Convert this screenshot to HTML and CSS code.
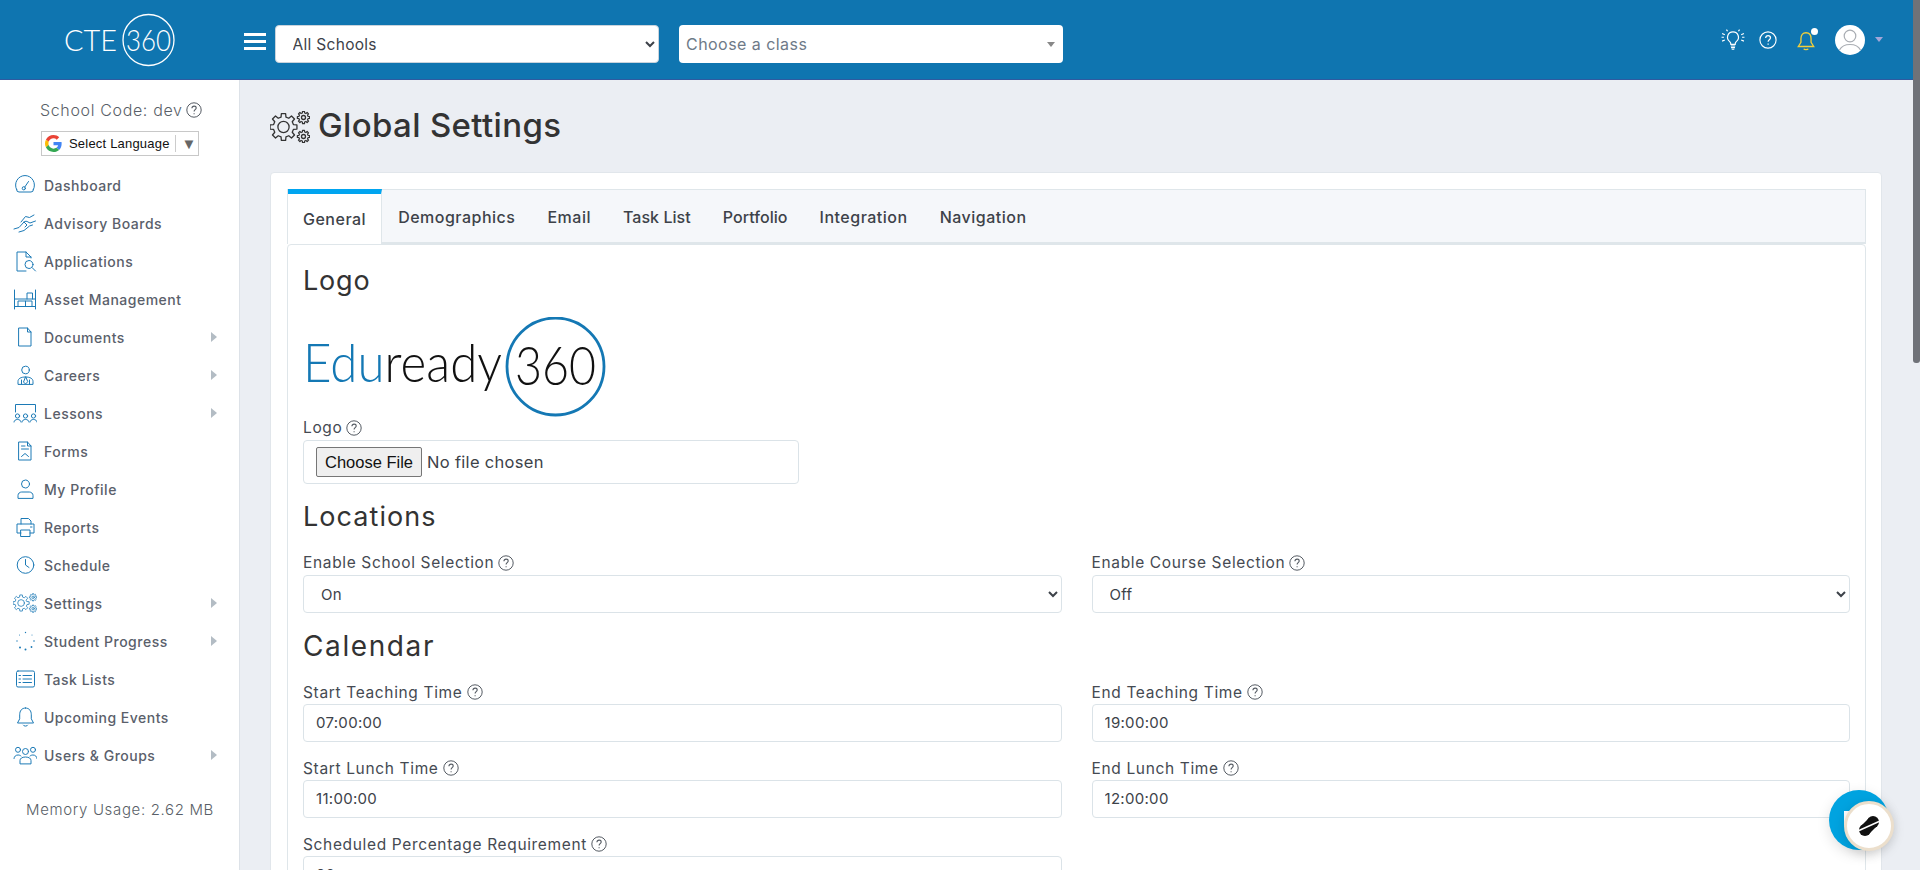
FILE: index.html
```html
<!DOCTYPE html>
<html lang="en">
<head>
<meta charset="utf-8">
<title>Global Settings</title>
<link rel="stylesheet" href="styles.css">
</head>
<body>
<svg class="defs" width="0" height="0" aria-hidden="true">
  <defs>
    <polygon id="gear" points="7.28,-1.81 9.88,-1.56 9.88,1.56 7.28,1.81 6.43,3.87 8.09,5.88 5.88,8.09 3.87,6.43 1.81,7.28 1.56,9.88 -1.56,9.88 -1.81,7.28 -3.87,6.43 -5.88,8.09 -8.09,5.88 -6.43,3.87 -7.28,1.81 -9.88,1.56 -9.88,-1.56 -7.28,-1.81 -6.43,-3.87 -8.09,-5.88 -5.88,-8.09 -3.87,-6.43 -1.81,-7.28 -1.56,-9.88 1.56,-9.88 1.81,-7.28 3.87,-6.43 5.88,-8.09 8.09,-5.88 6.43,-3.87"/>
    <symbol id="gears" viewBox="0 0 40 32">
      <g fill="none" stroke="currentColor" stroke-linejoin="round">
        <use href="#gear" transform="translate(13.5 16) scale(1.36)" stroke-width=".95"/>
        <circle cx="13.5" cy="16" r="5.6" stroke-width="1.3"/>
        <use href="#gear" transform="translate(33.5 6.5) scale(.62)" stroke-width="2"/>
        <circle cx="33.5" cy="6.5" r="2" stroke-width="1.3"/>
        <use href="#gear" transform="translate(33.5 25.5) scale(.62)" stroke-width="2"/>
        <circle cx="33.5" cy="25.5" r="2" stroke-width="1.3"/>
      </g>
    </symbol>
    <symbol id="help" viewBox="0 0 16 16">
      <circle cx="8" cy="8" r="7.2" fill="none" stroke="currentColor" stroke-width="1"/>
      <path d="M5.9 6.2c.1-1.3 1-2.1 2.2-2.1 1.2 0 2.1.8 2.1 1.9 0 1.7-2.1 1.7-2.1 3.5M8.1 11.2v1" fill="none" stroke="currentColor" stroke-width="1.1"/>
    </symbol>
  </defs>
</svg>

<header class="topbar">
  <svg class="brand" viewBox="0 0 140 60" width="140" height="60" role="img" aria-label="CTE 360">
    <text class="brand-text" x="4" y="41" textLength="53" lengthAdjust="spacingAndGlyphs">CTE</text>
    <circle cx="88.500" cy="30" r="25.500" fill="none" stroke="#fff" stroke-width="1.3"/>
    <text class="brand-text" x="66" y="41" textLength="45" lengthAdjust="spacingAndGlyphs">360</text>
  </svg>
  <div class="burger"><span></span><span></span><span></span></div>
  <select class="top-select"><option>All Schools</option></select>
  <div class="class-pick"><span>Choose a class</span><i class="class-caret"></i></div>
  <div class="top-icons">
    <svg class="ti-bulb" viewBox="0 0 22 22" width="24" height="24" fill="none" stroke="#fff" stroke-width="1.1">
      <path d="M11 3.5a5 5 0 0 0-3 9c.8.7 1 1.5 1 2.5h4c0-1 .2-1.8 1-2.5a5 5 0 0 0-3-9zM9 16.5h4M9.2 18h3.6M9.8 19.5h2.4"/>
      <path d="M1 5l2.5 1.2M1 12l2.5-1M.5 8.5h2.2M21 5l-2.5 1.2M21 12l-2.5-1M21.500 8.500h-2.200M5 1.500l1 1.500M17 1.500l-1 1.500"/>
    </svg>
    <svg class="ti-help" width="18" height="18"><use href="#help"/></svg>
    <span class="ti-bell">
      <svg viewBox="0 0 18 20" width="20" height="22" fill="none" stroke="#f2cf3b" stroke-width="1.2">
        <path d="M9 2.500c-3 0-4.600 2.300-4.600 5.500v3.200L2 15h14l-2.400-3.800V8c0-3.200-1.600-5.500-4.600-5.500zM7 17c.4 1.100 3.600 1.100 4 0"/>
      </svg>
      <i class="bell-dot"></i>
    </span>
    <svg class="ti-avatar" viewBox="0 0 30 30" width="30" height="30">
      <circle cx="15" cy="15" r="15" fill="#fff"/>
      <circle cx="15" cy="11" r="5.800" fill="none" stroke="#a9adb3" stroke-width="1.200"/>
      <path d="M4.500 25c2-3.800 6-5.500 10.500-5.500S23.500 21.200 25.500 25" fill="none" stroke="#a9adb3" stroke-width="1.200"/>
    </svg>
    <i class="avatar-caret"></i>
  </div>
</header>

<div class="layout">
  <aside class="sidebar">
    <div class="school-code">School Code: dev<svg class="help" width="16" height="16"><use href="#help"/></svg></div>
    <div class="translate">
      <svg viewBox="0 0 48 48" width="17" height="17">
        <path fill="#EA4335" d="M24 9.500c3.540 0 6.710 1.220 9.210 3.600l6.850-6.850C35.900 2.380 30.470 0 24 0 14.620 0 6.510 5.380 2.560 13.220l7.980 6.190C12.430 13.720 17.740 9.500 24 9.500z"/>
        <path fill="#4285F4" d="M46.980 24.550c0-1.570-.15-3.090-.38-4.550H24v9.020h12.940c-.58 2.960-2.260 5.480-4.780 7.180l7.730 6c4.510-4.180 7.090-10.360 7.090-17.650z"/>
        <path fill="#FBBC05" d="M10.530 28.590c-.48-1.450-.76-2.990-.76-4.590s.27-3.140.76-4.590l-7.980-6.190C.92 16.460 0 20.120 0 24c0 3.880.92 7.540 2.560 10.780l7.970-6.190z"/>
        <path fill="#34A853" d="M24 48c6.480 0 11.930-2.130 15.890-5.810l-7.730-6c-2.150 1.450-4.920 2.300-8.160 2.300-6.260 0-11.570-4.220-13.470-9.910l-7.980 6.190C6.510 42.620 14.620 48 24 48z"/>
      </svg>
      <span class="translate-text">Select Language</span>
      <i class="translate-sep"></i>
      <span class="translate-arrow">▼</span>
    </div>
    <nav class="nav">
      <a class="nav-item"><svg class="ni" viewBox="0 0 24 24"><path d="M3.600 16.500A9.500 9.500 0 1 1 20.400 16.500M3.600 16.500Q3.400 19 6 19H18Q20.600 19 20.400 16.500"/><circle cx="10.800" cy="15.300" r="1.600"/><path d="M11.800 14l3.700-5.500"/></svg><span>Dashboard</span></a>
      <a class="nav-item"><svg class="ni" viewBox="0 0 24 24"><path d="M1 18l5-1.500 5-5.500c1-1 3-1 4 0l2 1 5.500-2M8 11l4.500-5.500 4 1 4.500-2.500M6 21l5-1.500 5.500-4.500 3-1M11 11l3 3-2 2"/></svg><span>Advisory Boards</span></a>
      <a class="nav-item"><svg class="ni" viewBox="0 0 24 24"><path d="M13 22H4V3h9l5 5v1M13 3v5h5"/><circle cx="16" cy="15.500" r="4"/><path d="M19 18.500l3.500 3.500"/></svg><span>Applications</span></a>
      <a class="nav-item"><svg class="ni" viewBox="0 0 24 24"><path d="M1.500 3v19M22.500 3v19M1.500 19.500h21M1.500 12h21M14 12V6h5.500v6M5 19.500V14h7.500v5.500M12.500 14H19v5.500"/></svg><span>Asset Management</span></a>
      <a class="nav-item has-sub"><svg class="ni" viewBox="0 0 24 24"><path d="M6 3h8.500L18 7v14H6zM14.500 3v4H18"/></svg><span>Documents</span><i class="arrow"></i></a>
      <a class="nav-item has-sub"><svg class="ni" viewBox="0 0 24 24"><circle cx="12.500" cy="7" r="3.800"/><path d="M5 21v-2.500c0-3 3-4.500 7.500-4.500s7.500 1.500 7.500 4.500V21zM12.500 14l-2 5 2 2 2-2zM8.500 17v4M16.500 17v4"/></svg><span>Careers</span><i class="arrow"></i></a>
      <a class="nav-item has-sub"><svg class="ni" viewBox="0 0 24 24"><path d="M2.500 11V3.500h20V11"/><circle cx="4.500" cy="15" r="2.100"/><circle cx="12.500" cy="15" r="2.100"/><circle cx="20.500" cy="15" r="2.100"/><path d="M1 21c0-3.500 7-3.500 7 0M9 21c0-3.500 7-3.500 7 0M17 21c0-3.500 7-3.500 7 0"/></svg><span>Lessons</span><i class="arrow"></i></a>
      <a class="nav-item"><svg class="ni" viewBox="0 0 24 24"><path d="M6 3h8.500L18 7v14H6zM14.500 3v4H18M8.500 7h3.500M8.500 10h7M8.500 17.500l3.500-3 3.500 3"/></svg><span>Forms</span></a>
      <a class="nav-item"><svg class="ni" viewBox="0 0 24 24"><circle cx="12.500" cy="7" r="4"/><path d="M5 21v-2.500c0-2 1.700-3.500 3.700-3.500h7.600c2 0 3.700 1.500 3.700 3.500V21z"/></svg><span>My Profile</span></a>
      <a class="nav-item"><svg class="ni" viewBox="0 0 24 24"><path d="M8 9V3.500h7.500L18 6v3M8 18H4V9h17v9h-4M8 15h9v6.500H8zM17.500 12h1.500"/></svg><span>Reports</span></a>
      <a class="nav-item"><svg class="ni" viewBox="0 0 24 24"><circle cx="12.500" cy="12" r="8.300"/><path d="M12.500 6.500V12l3.500 2.500"/></svg><span>Schedule</span></a>
      <a class="nav-item has-sub"><svg class="ni ni-gears"><use href="#gears"/></svg><span>Settings</span><i class="arrow"></i></a>
      <a class="nav-item has-sub"><svg class="ni ni-dots" viewBox="0 0 24 24"><circle cx="12.500" cy="3.500" r=".7"/><circle cx="19" cy="6" r=".5"/><circle cx="21" cy="12" r=".8"/><circle cx="18.500" cy="18" r=".9"/><circle cx="12.500" cy="20.500" r="1"/><circle cx="7" cy="18.500" r="1"/><circle cx="4" cy="12" r=".7"/><circle cx="6.500" cy="6" r=".5"/></svg><span>Student Progress</span><i class="arrow"></i></a>
      <a class="nav-item"><svg class="ni" viewBox="0 0 24 24"><rect x="3.500" y="4" width="18" height="16" rx="1.500"/><path d="M10 8.500h8.500M10 12h8.500M10 15.500h8.500M6 8.500h1.500M6 12h1.500M6 15.500h1.500"/></svg><span>Task Lists</span></a>
      <a class="nav-item"><svg class="ni" viewBox="0 0 24 24"><path d="M12.500 3c-3.800 0-5.800 2.800-5.800 6.800v4L4.500 18h16l-2.200-4.200v-4C18.300 5.800 16.300 3 12.500 3zM10.300 20.200c.5 1.300 3.900 1.300 4.400 0"/></svg><span>Upcoming Events</span></a>
      <a class="nav-item has-sub"><svg class="ni" viewBox="0 0 24 24"><circle cx="12.500" cy="8.500" r="3"/><circle cx="5" cy="6.800" r="2.500"/><circle cx="20" cy="6.800" r="2.500"/><path d="M7 20.500v-3c0-2 2-3.500 5.500-3.500s5.500 1.500 5.500 3.500v3zM1 15.500c.2-2 1.700-3.500 4-3.500 1.200 0 2.200.3 3 1M24 15.500c-.2-2-1.700-3.500-4-3.500-1.200 0-2.200.3-3 1"/></svg><span>Users &amp; Groups</span><i class="arrow"></i></a>
    </nav>
    <div class="memory">Memory Usage: 2.62 MB</div>
  </aside>

  <main class="main">
    <h1 class="page-title"><svg class="title-icon"><use href="#gears"/></svg><span class="title-text">Global Settings</span></h1>
    <section class="card">
      <div class="tabs">
        <a class="tab active">General</a>
        <a class="tab">Demographics</a>
        <a class="tab">Email</a>
        <a class="tab tight">Task List</a>
        <a class="tab tight">Portfolio</a>
        <a class="tab">Integration</a>
        <a class="tab">Navigation</a>
      </div>
      <div class="panel">
        <h3 class="section-head first">Logo</h3>
        <svg class="edu-logo" viewBox="0 0 303 100" width="303" height="100" role="img" aria-label="Eduready 360">
          <text class="edu-text" x="0" y="65" textLength="199" lengthAdjust="spacingAndGlyphs"><tspan fill="#1478b4">Edu</tspan>ready</text>
          <circle cx="252.500" cy="49.500" r="48.500" fill="none" stroke="#1478b4" stroke-width="2.800"/>
          <text class="edu-text" x="212" y="68" textLength="81" lengthAdjust="spacingAndGlyphs">360</text>
        </svg>
        <label class="field-label logo-label">Logo <svg class="help" width="16" height="16"><use href="#help"/></svg></label>
        <div class="file-box"><input class="file-input" type="file"></div>

        <h3 class="section-head locations">Locations</h3>
        <div class="row">
          <div class="group">
            <label class="field-label">Enable School Selection <svg class="help" width="16" height="16"><use href="#help"/></svg></label>
            <select class="control"><option>On</option></select>
          </div>
          <div class="group">
            <label class="field-label">Enable Course Selection <svg class="help" width="16" height="16"><use href="#help"/></svg></label>
            <select class="control"><option>Off</option></select>
          </div>
        </div>

        <h3 class="section-head calendar">Calendar</h3>
        <div class="row">
          <div class="group">
            <label class="field-label">Start Teaching Time <svg class="help" width="16" height="16"><use href="#help"/></svg></label>
            <input class="control" value="07:00:00">
          </div>
          <div class="group">
            <label class="field-label">End Teaching Time <svg class="help" width="16" height="16"><use href="#help"/></svg></label>
            <input class="control" value="19:00:00">
          </div>
          <div class="group">
            <label class="field-label">Start Lunch Time <svg class="help" width="16" height="16"><use href="#help"/></svg></label>
            <input class="control" value="11:00:00">
          </div>
          <div class="group">
            <label class="field-label">End Lunch Time <svg class="help" width="16" height="16"><use href="#help"/></svg></label>
            <input class="control" value="12:00:00">
          </div>
          <div class="group">
            <label class="field-label">Scheduled Percentage Requirement <svg class="help" width="16" height="16"><use href="#help"/></svg></label>
            <input class="control" value="90">
          </div>
        </div>
      </div>
    </section>
  </main>
</div>

<div class="scroll-thumb"></div>
<div class="chat">
  <i class="chat-bubble"></i>
  <div class="chat-badge">
    <svg viewBox="0 0 24 24" width="24" height="24">
      <circle cx="8" cy="16" r="6" fill="#111"/>
      <circle cx="16" cy="8" r="6" fill="#111"/>
      <path d="M4 12l8-8 8 8-8 8z" fill="#111"/>
      <path d="M2 16.500L22 7.500" stroke="#fff" stroke-width="1.500"/>
    </svg>
  </div>
</div>
</body>
</html>
```
FILE: styles.css
```css
* { box-sizing: border-box; }
html, body { margin: 0; height: 100%; }
body {
  height: 100vh;
  overflow: hidden;
  display: flex;
  flex-direction: column;
  background: #ebeef3;
  font-family: Inter, "Noto Sans", sans-serif;
  color: #3d4249;
}
.defs { position: absolute; }

/* top bar */
.topbar {
  flex: 0 0 80px;
  display: flex;
  align-items: center;
  background: #0f75b0;
  border-bottom: 1px solid #2f5aa0;
  padding-left: 60px;
}
.brand { flex: none; margin-right: 44px; margin-top: 1px; }
.brand-text { font-family: Lato, sans-serif; font-weight: 300; font-size: 30px; fill: #fff; }
.burger { flex: none; width: 22px; display: flex; flex-direction: column; gap: 3.500px; margin-right: 9px; margin-top: 4px; }
.burger span { display: block; height: 3.500px; background: #fff; }
.top-select {
  flex: none;
  width: 384px;
  height: 38px;
  margin-top: 9px;
  padding: 0 8px 0 12.500px;
  border: 1px solid #c9d3dc;
  border-radius: 4px;
  background: #fff;
  font: 15.500px Inter, sans-serif;
  letter-spacing: .3px;
  color: #3d4249;
}
.class-pick {
  flex: none;
  width: 384px;
  height: 38px;
  margin-top: 9px;
  margin-left: 20px;
  display: flex;
  align-items: center;
  justify-content: space-between;
  padding: 0 8px 0 7px;
  border-radius: 4px;
  background: #fff;
  font-size: 16px;
  letter-spacing: .45px;
  color: #6e7a88;
}
.class-caret { border: 4px solid transparent; border-top: 5px solid #888; border-bottom: 0; }
.top-icons { position: relative; flex: 1; align-self: stretch; display: flex; align-items: center; padding-left: 658px; }
.ti-bulb { flex: none; }
.ti-help { flex: none; color: #fff; margin-left: 14px; }
.ti-bell { position: relative; flex: none; display: block; width: 20px; height: 22px; margin-left: 19px; margin-top: 2px; }
.ti-bell svg { display: block; }
.bell-dot { position: absolute; right: -2px; top: -2px; width: 7px; height: 7px; border-radius: 50%; background: #fff; }
.ti-avatar { flex: none; margin-left: 19px; }
.avatar-caret { flex: none; margin-left: 10px; border: 4px solid transparent; border-top: 5px solid #a3a6d8; border-bottom: 0; }

/* layout */
.layout { flex: 1; display: flex; min-height: 0; }
.sidebar {
  flex: 0 0 240px;
  background: #fff;
  border-right: 1px solid #dde2e8;
  padding-top: 19px;
}
.school-code {
  display: flex;
  align-items: center;
  justify-content: flex-start;
  height: 22px;
  padding-left: 40px;
  font-size: 16px;
  font-weight: 300;
  letter-spacing: .65px;
  color: #5a5f68;
  white-space: pre;
}
.help { flex: none; color: #555b63; vertical-align: -3px; }
.school-code .help { margin-left: 3px; }
.translate {
  display: flex;
  align-items: center;
  width: 158px;
  height: 25px;
  margin: 10px 0 0 41px;
  padding-left: 3px;
  border: 1px solid #c8c8c8;
  font-family: "Liberation Sans", Arial, sans-serif;
  font-size: 13px;
  letter-spacing: .2px;
  color: #111;
}
.translate-text { margin-left: 7px; }
.translate-sep { width: 1px; height: 17px; margin-left: 5px; background: #ccc; }
.translate-arrow { margin-left: 6px; font-size: 15px; color: #666; }
.nav { margin-top: 10px; }
.nav-item {
  display: flex;
  align-items: center;
  height: 38px;
  padding-left: 13px;
  padding-right: 22px;
  font-size: 14px;
  font-weight: 500;
  letter-spacing: .5px;
  color: #5a606b;
}
.ni {
  flex: none;
  width: 24px;
  height: 24px;
  margin-right: 7px;
  fill: none;
  stroke: #1c7ab6;
  stroke-width: 1;
  stroke-linejoin: round;
  stroke-linecap: round;
  color: #1c7ab6;
}
.ni-gears { stroke: none; }
.ni-dots { fill: #1c7ab6; stroke: none; }
.arrow { margin-left: auto; border: 5px solid transparent; border-left: 6px solid #b3bcc4; border-right: 0; }
.memory {
  margin-top: 26px;
  padding-left: 26px;
  font-size: 15px;
  font-weight: 300;
  letter-spacing: .65px;
  color: #5a5f68;
}

/* main */
.main { flex: 1; min-width: 0; padding: 0 38px 0 30px; }
.page-title {
  display: flex;
  align-items: center;
  height: 40px;
  margin: 27px 0 25px;
  font-size: 33px;
  font-weight: 500;
  letter-spacing: .35px;
  color: #333;
}
.title-icon { flex: none; width: 40px; height: 32px; margin-right: 8px; color: #333; }
.title-text { padding-bottom: 4px; }
.card {
  background: #fff;
  border: 1px solid #e1e6eb;
  border-radius: 4px;
  padding: 16px 15px 0 16px;
  height: 900px;
}
.tabs {
  display: flex;
  height: 55px;
  background: #f5f7fa;
  border: 1px solid #dfe6ea;
  border-bottom-width: 2px;
}
.tab {
  display: flex;
  align-items: center;
  padding: 0 16px;
  margin-top: 2px;
  font-size: 16px;
  font-weight: 500;
  letter-spacing: .5px;
  color: #3d4249;
}
.tab.tight { letter-spacing: .05px; }
.tab.active {
  margin-top: -1px;
  margin-bottom: -2px;
  padding-left: 15px;
  padding-right: 15px;
  background: #fff;
  border-top: 5px solid #00a5f0;
  border-right: 1px solid #dfe6ea;
}
.panel {
  border: 1px solid #dfe6ea;
  border-radius: 4px;
  padding: 0 15px;
  height: 800px;
}
.section-head {
  margin: 17px 0 18px;
  height: 32px;
  font-size: 27px;
  line-height: 32px;
  font-weight: 400;
  letter-spacing: .8px;
  color: #333;
}
.section-head.first { margin: 20px 0 20px; }
.section-head.locations { letter-spacing: 1.05px; }
.section-head.calendar { margin-top: 1.500px; margin-bottom: 19px; font-size: 28px; letter-spacing: 1.6px; }
.edu-logo { display: block; }
.edu-text { font-family: Lato, sans-serif; font-weight: 300; font-size: 53px; fill: #111; }
.field-label {
  display: flex;
  align-items: center;
  gap: 4px;
  height: 23px;
  font-size: 15.500px;
  font-weight: 400;
  letter-spacing: .65px;
  color: #454a52;
}
.logo-label { margin-top: -1px; margin-bottom: 1px; }
.file-box {
  width: 496px;
  height: 44px;
  padding: 6px 12px;
  border: 1px solid #dbe3e8;
  border-radius: 4px;
  display: flex;
  align-items: center;
}
.file-input { font: 16.500px Inter, sans-serif; letter-spacing: .3px; color: #3d4249; }
.file-input::file-selector-button {
  height: 30px;
  margin-right: 5px;
  padding: 0 8px;
  background: #efefef;
  border: 1px solid #767676;
  border-radius: 2px;
  color: #111;
}
.row { display: grid; grid-template-columns: 1fr 1fr; column-gap: 30px; }
.group { margin-bottom: 15px; }
.control {
  display: block;
  width: 100%;
  height: 38px;
  padding: 0 12px;
  background: #fff;
  border: 1px solid #dbe3e8;
  border-radius: 4px;
  font: 15px Inter, sans-serif;
  letter-spacing: .3px;
  color: #3d4249;
  outline: 0;
}
select.control { padding-left: 13px; margin-top: 1px; }

/* overlays */
.scroll-thumb {
  position: absolute;
  top: 0;
  right: 0;
  width: 7px;
  height: 363px;
  background: #6f7278;
  border-radius: 0 0 3px 3px;
}
.chat { position: absolute; left: 1829px; top: 790px; width: 66px; height: 62px; }
.chat-bubble {
  position: absolute;
  left: 0;
  top: 0;
  width: 60px;
  height: 60px;
  border-radius: 50%;
  background: #00a3e0;
  box-shadow: 0 4px 14px rgba(0, 0, 0, .12);
}
.chat-bubble::after {
  content: "";
  position: absolute;
  left: 15px;
  top: 21px;
  width: 14px;
  height: 14px;
  background: #fff;
}
.chat-badge {
  position: absolute;
  left: 15px;
  top: 11px;
  width: 50px;
  height: 50px;
  display: flex;
  align-items: center;
  justify-content: center;
  border-radius: 50%;
  background: #fff;
  border: 3px solid #ecdfcc;
  box-shadow: 0 3px 12px rgba(0, 0, 0, .15);
}
```
